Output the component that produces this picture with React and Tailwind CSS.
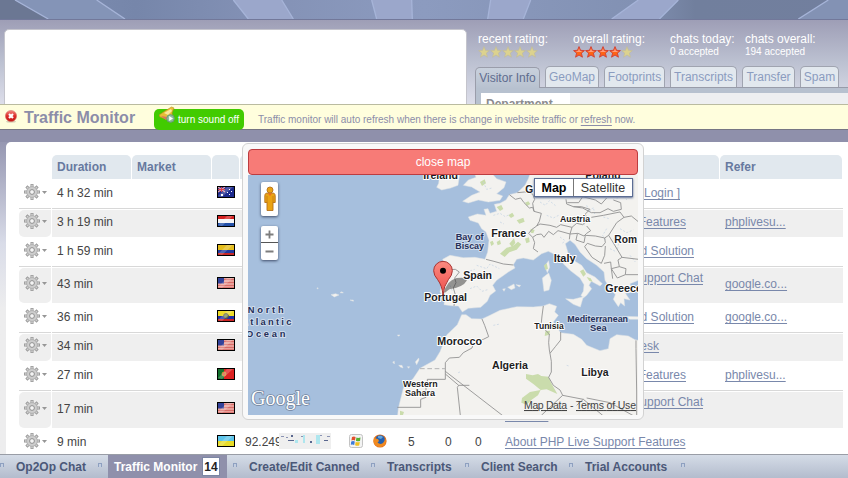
import React from "react";

const FONT = "font-['Liberation_Sans',Arial,sans-serif]";

function Banner() {
  return (
    <svg className="block h-[19px] w-full shrink-0" viewBox="0 0 2544 57" preserveAspectRatio="none">
      <defs>
        <linearGradient id="bn" x1="0" x2="1" y1="0" y2="0">
          <stop offset="0" stopColor="#7f8fb3" />
          <stop offset=".16" stopColor="#7686aa" />
          <stop offset=".3" stopColor="#8391b5" />
          <stop offset=".5" stopColor="#8c9bbf" />
          <stop offset=".75" stopColor="#8291b3" />
          <stop offset=".82" stopColor="#717f9d" />
          <stop offset="1" stopColor="#727f9e" />
        </linearGradient>
      </defs>
      <rect width="2544" height="57" fill="url(#bn)" />
      <path d="M0 0H45L145 57H0Z" fill="#6b7793" />
      <path d="M45 0H290L375 57H145Z" fill="#8494b7" />
      <path d="M700 0H845L880 57H745ZM1115 0H1235L1237 57H1130ZM1472 0H1592L1570 57H1463ZM1915 0H2035L1978 57H1835Z" fill="#9ba7cb" />
      <path d="M2485 0H2544V57H2395Z" fill="#8392b4" />
      <path
        d="M45 0L145 57M290 0L375 57M700 0L745 57M845 0L880 57M1115 0L1130 57M1235 0L1237 57M1472 0L1463 57M1592 0L1570 57M1915 0L1835 57M2035 0L1978 57M2485 0L2395 57"
        fill="none" stroke="#a6b4d8" strokeWidth="4"
      />
    </svg>
  );
}

function Star({ on }) {
  return (
    <svg className="h-3 w-3" viewBox="0 0 12 12">
      <path d="M6 .6L7.5 4.3L11.4 4.6L8.4 7.1L9.4 11.2L6 9L2.6 11.2L3.6 7.1L.6 4.6L4.5 4.3Z"
        fill={on ? "#ff6414" : "#dcd28e"} stroke={on ? "#d24438" : "#c0bb9c"} strokeWidth={on ? "1" : ".7"} />
      {on && <path d="M6 2.4L7 5L9.2 5.2L8 6L4 6L2.8 5.2L5 5Z" fill="#ff9c80" />}
    </svg>
  );
}

function Rating({ label, score, className }) {
  return (
    <div className={className}>
      <div>{label}</div>
      <div className="flex">{[0, 1, 2, 3, 4].map((i) => <Star key={i} on={i < score} />)}</div>
    </div>
  );
}

const tabs = [
  ["GeoMap", "w-[54px]"], ["Footprints", "w-[61px]"], ["Transcripts", "w-[67px]"],
  ["Transfer", "w-[53px]"], ["Spam", "w-[39px]"],
];

function Header() {
  return (
    <header className="flex h-[85px] shrink-0 overflow-hidden border-t border-[#72789a] bg-linear-to-b from-[#9e9eb6] via-[#bcc1d1] to-[#dddeea] pl-1">
      <div className="mt-[9px] h-20 w-[463px] shrink-0 rounded-t-[5px] border border-[#c4c4cc] bg-white" />
      <div className="ml-2 flex w-[373px] shrink-0 flex-col">
        <div className="flex h-[46px] shrink-0 pl-[3px] pt-3 text-[12px] leading-[14px] text-white">
          <Rating label="recent rating:" score={0} className="w-[95px]" />
          <Rating label="overall rating:" score={4} className="w-[97px]" />
          <div className="w-[75px]">
            <div>chats today:</div>
            <div className="text-[10px] leading-[11px]">0 accepted</div>
          </div>
          <div>
            <div>chats overall:</div>
            <div className="text-[10px] leading-[11px]">194 accepted</div>
          </div>
        </div>
        <div className="flex shrink-0 gap-[5px] text-[12px]">
          <div className="mt-px h-[22px] w-[65px] rounded-t-[5px] border border-b-0 border-[#9a9daa] bg-linear-to-b from-[#c9d1dd] to-[#b7c1cf] pt-px text-center leading-[19px] text-[#5f6c8e]">
            Visitor Info
          </div>
          {tabs.map(([t, w]) => (
            <div key={t} className={`h-[21px] rounded-t-[5px] border border-b-0 border-[#a0a4b0] bg-[#e2e8ee] text-center leading-[20px] text-[#8b9cbf] ${w}`}>
              {t}
            </div>
          ))}
        </div>
        <div className="-mt-[2px] ml-[65px] h-px shrink-0 bg-[#989ca9]" />
        <div className="flex h-[30px] shrink-0 border-l border-[#9a9daa] bg-[#b7c1cf] pl-[5px] pt-[5px]">
          <div className="w-[89px] bg-white pl-[5px] pt-[4px] text-[12px] font-bold leading-[14px] text-[#8b8b8f]">Department</div>
          <div className="grow bg-[#eeeff1]" />
        </div>
      </div>
    </header>
  );
}

function NoticeBar() {
  return (
    <div className="flex h-[26px] shrink-0 border-b border-t border-b-[#767684] border-t-[#babba0] bg-[#fffedd] pl-[5px] text-[#8c8da9]">
      <svg className="mt-[5px] h-[13px] w-3" viewBox="0 0 12 13">
        <defs><linearGradient id="rd" x1="0" x2="0" y1="0" y2="1"><stop stopColor="#f48b84" /><stop offset=".5" stopColor="#dc2c28" /><stop offset="1" stopColor="#c31414" /></linearGradient></defs>
        <ellipse cx="6" cy="11.6" rx="5" ry="1.2" fill="#d8d2b8" />
        <circle cx="6" cy="6" r="5.6" fill="url(#rd)" stroke="#d46a60" strokeWidth=".5" />
        <path d="M4 4L8 8M8 4L4 8" stroke="#fff" strokeWidth="2.2" />
      </svg>
      <h1 className="ml-[7px] w-[130px] text-[16px] font-bold leading-[25px]">Traffic Monitor</h1>
      <div className="mt-1 flex h-[21px] w-[90px] rounded-[5px] bg-[#42cb00] pl-[5px] text-[10px] leading-[21px] text-white">
        <svg className="-mt-[3px] mr-[3px] h-[18px] w-4 shrink-0" viewBox="0 0 16 18">
          <path d="M12.5 1L15 2L13 7L14 13L9 14L1 11L0 9L6 5Z" fill="#e7bd35" stroke="#b98b1c" strokeWidth=".6" />
          <path d="M12 3L5 7L9 9L13 5Z" fill="#fbe79a" />
          <path d="M2 10L8 11L7 14Z" fill="#d7765e" />
          <circle cx="11.5" cy="12.5" r="3.8" fill="#8fbd98" stroke="#6d987d" />
          <path d="M10.2 10L14 12.5L10.2 15Z" fill="#fff" />
        </svg>
        <span className="whitespace-nowrap">turn sound off</span>
      </div>
      <p className="ml-[14px] whitespace-nowrap text-[10px] leading-[29px]">
        Traffic monitor will auto refresh when there is change in website traffic or <a className="underline underline-offset-2">refresh</a> now.
      </p>
    </div>
  );
}

function Gear() {
  return (
    <svg className="h-4 w-6" viewBox="0 0 24 16">
      <g stroke="#969696" strokeWidth="3">
        <path d="M8 0V16M0 8H16M2.4 2.4L13.6 13.6M13.6 2.4L2.4 13.6" />
      </g>
      <g stroke="#cfcfcf" strokeWidth="1.6">
        <path d="M8 .8V15.2M.8 8H15.2M3 3L13 13M13 3L3 13" />
      </g>
      <circle cx="8" cy="8" r="5.4" fill="#cdcdcd" stroke="#a9a9a9" strokeWidth=".8" />
      <circle cx="8" cy="8" r="2.4" fill="#f4f4f4" stroke="#8f8f8f" strokeWidth="1" />
      <path d="M18 7H23L20.5 10Z" fill="#969696" />
    </svg>
  );
}

function FlagArt({ kind }) {
  switch (kind) {
    case "au":
      return (<><rect width="18" height="12" fill="#1c2a8e" /><path d="M1 1L8 6M8 1L1 6" stroke="#e8a0a8" strokeWidth="1.3" /><path d="M4.5 1V6M1 3.5H8" stroke="#d84050" /><path d="M4 8h2v2H4zM12 3h1v1h-1zM14 5h1v1h-1zM12 8h1v1h-1zM10 6h1v1h-1z" fill="#fff" /></>);
    case "nl":
      return (<><rect width="18" height="12" fill="#f4f4f6" /><rect width="18" height="4" fill="#d42020" /><rect y="8" width="18" height="4" fill="#2350a8" /></>);
    case "co":
      return (<><rect width="18" height="12" fill="#e4bd1c" /><rect y="6" width="18" height="3" fill="#223a9e" /><rect y="9" width="18" height="3" fill="#c82828" /></>);
    case "ec":
      return (<><rect width="18" height="12" fill="#efdc28" /><rect y="6" width="18" height="3" fill="#2030a8" /><rect y="9" width="18" height="3" fill="#cc2626" /><circle cx="9" cy="6" r="2.4" fill="#7c8c5c" stroke="#5a5a40" /></>);
    case "us":
      return (<><rect width="18" height="12" fill="#e8a09a" /><path d="M0 2.5H18M0 5.5H18M0 8.5H18M0 10.8H18" stroke="#d86c68" strokeWidth="1.2" /><rect width="7" height="6.5" fill="#33429a" /></>);
    case "pt":
      return (<><rect width="18" height="12" fill="#dc2222" /><rect width="7" height="12" fill="#12702c" /><circle cx="7" cy="6" r="2" fill="#e05a40" stroke="#c8a830" strokeWidth=".8" /></>);
    default:
      return (<><rect width="18" height="12" fill="#5cc4ea" /><rect y="6" width="18" height="6" fill="#e8dc28" /></>);
  }
}

function Flag({ kind }) {
  return (
    <svg className="h-3 w-[18px]" viewBox="0 0 18 12">
      <FlagArt kind={kind} />
      <path d="M1 10L10 1H16L5 11Z" fill="#fff" opacity=".22" />
      <rect x=".5" y=".5" width="17" height="11" fill="none" stroke="#000" />
    </svg>
  );
}

const rows = [
  { d: "4 h 32 min", f: "au", link: "[ Login ]", w: "w-[175px]" },
  { d: "3 h 19 min", f: "nl", h: "h-[27px]", link: "Features", w: "w-[181px]", refer: "phplivesu..." },
  { d: "1 h 59 min", f: "co", link: "and Solution", w: "w-[189px]" },
  { d: "43 min", f: "us", h: "h-[35px]", link: "Support Chat", second: "Solution", w: "w-[198px]", refer: "google.co..." },
  { d: "36 min", f: "ec", link: "and Solution", w: "w-[189px]", refer: "google.co..." },
  { d: "34 min", f: "us", h: "h-[27px]", link: "Desk", w: "w-[154px]" },
  { d: "27 min", f: "pt", link: "Features", w: "w-[181px]", refer: "phplivesu..." },
  { d: "17 min", f: "us", h: "h-[36px]", link: "Support Chat", second: "Solution", w: "w-[198px]" },
];

function RowCells({ row }) {
  return (
    <>
      <div className="w-[78px] pl-[5px] pt-[2px]">{row.d}</div>
      <div className="w-[87px]" />
      <Flag kind={row.f} />
    </>
  );
}

const LINK = "text-[#7988ab] underline underline-offset-2";

function Row({ row }) {
  const gray = !!row.h;
  const bg = gray ? "bg-[#efefef]" : "border-b border-[#d8d8d8]";
  return (
    <div className={`flex shrink-0 ${gray ? row.h : "mb-px h-[30px]"}`}>
      <div className={`mr-px flex w-8 items-center pl-[5px] ${gray ? "rounded-l-[5px] rounded-br-[5px] pb-[5px]" : "pb-[3px]"} ${bg}`}>
        <Gear />
      </div>
      <div className={`flex w-[791px] items-center ${gray ? "pb-[5px]" : "pb-[3px]"} ${bg}`}>
        <RowCells row={row} />
        <div className="ml-[270px] w-[220px] pt-[2px]">
          {row.second ? (
            <div className="-my-2 leading-[13px]">
              <div className={`pt-px text-right ${row.w} ${LINK}`}>{row.link}</div>
              <div className={LINK}>{row.second}</div>
            </div>
          ) : (
            <div className={`text-right ${row.w} ${LINK}`}>{row.link}</div>
          )}
        </div>
        <div className={`pt-[2px] ${LINK}`}>{row.refer}</div>
      </div>
    </div>
  );
}

function LastRow() {
  return (
    <div className="flex h-[27px] shrink-0">
      <div className="mr-px flex w-8 items-center pb-px pl-[5px]"><Gear /></div>
      <div className="flex w-[791px] items-center pb-px">
        <RowCells row={{ d: "9 min", f: "ua" }} />
        <div className="ml-[10px] w-[34px] overflow-hidden pt-[2px]">92.249</div>
        <svg className="h-4 w-[52px] bg-[#efefef]" viewBox="0 0 52 16">
          <path d="M2 3h3v1H2zM7 4h2v1H7zM22 3h3v1h-3zM40 2h3v1h-3zM48 3h3v1h-3z" fill="#8a93b4" />
          <path d="M12 2h2v2h-2zM9 7h6v1H9zM31 8h2v2h-2zM45 7h4v1h-4z" fill="#59678f" />
          <path d="M16 7h3v3h-3zM24 2h2v8h-2zM37 2h4v9h-4z" fill="#aee6ee" />
        </svg>
        <svg className="ml-[18px] h-[14px] w-[14px]" viewBox="0 0 14 14">
          <rect x=".5" y=".5" width="13" height="13" rx="2" fill="#f3f3f3" stroke="#c3c3c3" />
          <path d="M3 3Q5 2 6.6 3L6 6.4Q4 5.6 2.4 6.4Z" fill="#e2502c" />
          <path d="M7.4 3.5Q9 4.4 11.5 3.5L11 7Q8.5 7.6 6.9 6.7Z" fill="#55b030" />
          <path d="M2.2 7.5Q4 6.6 5.8 7.4L5.2 11Q3.6 10 1.8 10.8Z" fill="#3c7ad8" />
          <path d="M6.7 7.8Q8.4 8.7 10.8 8L10.2 11.4Q8 12.2 6.1 11.2Z" fill="#f0c020" />
        </svg>
        <svg className="ml-[10px] h-[14px] w-[14px]" viewBox="0 0 14 14">
          <circle cx="7" cy="7" r="6.6" fill="#e2711d" />
          <circle cx="7.2" cy="6" r="4.8" fill="#2460b0" />
          <path d="M5 2Q8 1 10 3L8 5L5 4Z" fill="#62a4dc" />
          <path d="M1 3Q2 5 5 5L6 7L4.5 8.5Q7 11 10 9Q12 7 12 4Q14 8 11.5 11Q8 14 4 12.3Q0 10 .5 6Z" fill="#f08a20" />
        </svg>
        <div className="ml-[21px] w-[37px] pt-[2px]">5</div>
        <div className="w-[30px] pt-[2px]">0</div>
        <div className="w-[30px] pt-[2px]">0</div>
        <div className={`whitespace-nowrap pt-[2px] ${LINK}`}>About PHP Live Support Features</div>
      </div>
    </div>
  );
}

const labels = [
  // text, centre x, baseline, font size, width, over water, letter-spaced
  ["Ireland", 122, 20, 32, 104], ["Poland", 609, 20, 32, 106],
  ["G", 388, 62, 32, 24], ["Austria", 525, 150, 27, 90], ["France", 326, 194, 32, 105],
  ["Bay of", 209, 204, 27, 84, 1], ["Biscay", 209, 230, 27, 86, 1],
  ["Rom", 677, 212, 33, 68], ["Italy", 494, 269, 33, 66], ["Spain", 233, 320, 32, 86],
  ["Portugal", 137, 388, 33, 128], ["Greece", 671, 359, 32, 110],
  ["Tunisia", 447, 470, 26, 88], ["Mediterranean", 593, 449, 27, 182, 1], ["Sea", 595, 476, 27, 50, 1],
  ["Morocco", 179, 520, 32, 134], ["Algeria", 330, 592, 33, 108], ["Libya", 585, 613, 33, 82],
  ["Western", 61, 644, 27, 104], ["Sahara", 60, 671, 27, 90],
  ["North", -403, 423, 28, 108, 1, 1], ["Atlantic", -401, 460, 28, 150, 1, 1], ["Ocean", -403, 496, 28, 118, 1, 1],
];

const greens = "M290 105l14-6 6 12-10 6zM325 130l12-8 6 10-10 6zM350 145l20-8 4 12-16 6zM290 210l10-6 3 12-10 4zM328 215l14-16 4 14-10 12zM300 245l20-18 18-4 16-14 10 8-14 16-22 8-14 14zM375 200l12-4 2 14-10 4zM270 210l8-4 4 10-8 6zM392 170l12 4-4 10-8-2zM375 92l10-4 6 8-10 6zM240 30l14-8 4 12-12 8zM432 280l8-6 4 16-8 4zM540 298l10-6 8 14-8 8zM560 315l12 4 6 10-10-2zM436 478l14-2-2 12-14 4zM378 606l20 4 16-4 10 6 22 2 6 16 20 36-32-14-18 2-22-18-22-16zM366 678l24-18 32-6-8 16-20 14-14 14-16-6zM0 716l12 4-4 12H0z";

function WorldMap() {
  return (
    <svg className="block h-[240px] w-[390px]" viewBox="248 175 390 240">
      <defs>
        <linearGradient id="pin" x1="0" x2="0" y1="0" y2="1"><stop stopColor="#fb8a80" /><stop offset="1" stopColor="#ee4e4a" /></linearGradient>
      </defs>
      <rect x="248" y="175" width="390" height="240" fill="#a6bfdd" />
      <g transform="translate(400 172) scale(.333333)">
        <g fill="#f3f2ef" stroke="#dfe3e5" strokeWidth="1.5">
          <path d="M392 0L385 20L375 40L352 62L328 68L318 84L300 94L283 97L290 118L270 124L264 110L252 112L258 130L232 126L205 135L210 145L235 153L245 170L258 180L267 205L263 240L255 262L225 256L190 257L150 250L128 262L135 280L132 310L120 360L134 380L132 398L160 402L175 402L187 420L205 409L242 406L262 388L270 370L287 357L278 340L290 325L325 300L345 288L340 278L350 262L370 258L400 264L425 245L445 238L470 250L490 275L510 295L540 318L552 338L550 358L543 370L550 378L560 370L575 350L567 340L574 328L600 342L607 335L585 315L560 302L545 280L520 265L505 245L496 215L510 205L525 217L540 240L560 260L590 280L612 300L615 325L628 345L646 368L640 382L655 404L662 392L674 402L672 380L690 384L676 364L698 360L690 335L715 325L730 318V0Z" />
          <path d="M222 0L228 16L205 24L190 40L215 45L240 60L215 70L188 88L205 93L235 84L265 90L300 85L308 72L290 65L312 47L318 30L290 20L272 0Z" />
          <path d="M120 0L116 34L110 46L125 54L152 48L174 40L180 0Z" />
          <path d="M-8 740L-5 709L10 649L40 619L60 589L105 564L120 539L140 489L172 458L185 428L198 428L215 440L246 441L270 430L300 415L350 404L400 405L430 402L448 395L470 403L464 420L475 430L460 450L482 482L520 487L545 502L560 520L600 536L625 530L630 500L650 488L685 492L705 503L730 508V740Z" />
          <path d="M497 380L520 382L550 374L541 405L520 397ZM427 318L446 303L454 325L447 354L432 358ZM434 282L446 266L449 286L442 302ZM323 346L342 336L345 348L334 353ZM348 338L362 340L358 345ZM308 351L316 350L312 358ZM668 433L716 434L716 442L690 442ZM690 344L708 350L700 357Z" />
          <path d="M-207 368l14-3 10 4-14 6zM-180 362l6-3 4 4zM-150 384l10 0 0 4zM-248 347l3 2-4 2zM-8 489l8 0-4 4zM-22 570l5-2 0 8zM-4 580l10 0 3 8-8-3zM22 584l7 0-3 5zM46 570l10-12 1 6-7 14z" />
        </g>
        <path d={greens} fill="#cadcac" />
        <path d="M560 100l8 20 12-14 4 20M640 60l10 20 20-16 10 20M280 130l20-6 16 10 14-8M230 280l30 10 10-14 28 14M210 350l20-8 16 16 20-6M480 195l14 10-8 12M620 170l-12 20 8 14M250 30l10 22 16-4M300 150l12 6M610 135l20 6M280 460l20-4M500 580l10 3M180 600l-10 4M640 200l16 14-4 20M420 90l16 10 12-14 20 16M440 130l20 8 20-10M540 150l16 10M660 170l20 12 20-8M630 230l20 10M690 250l16 20M200 300l24-8M150 340l8 20" fill="none" stroke="#bfd0e2" strokeWidth="2" strokeDasharray="6 5" />
        <path
          d="M258 262L282 268L310 276L340 279M132 294L166 292L178 300L164 318L168 332L160 348L166 368L162 402M328 68L346 82L362 78L372 92L388 108L398 106L402 118L424 124L418 148L410 162L420 156L450 160L470 166L482 158L516 166L530 154L548 158L562 146L556 126L570 112L544 104L520 104L500 96L498 82M352 62L374 60L398 66L404 82L398 94L402 118M410 162L396 172L386 184L398 196L404 212L400 230L414 240M398 196L410 188L424 186L432 196L446 178L460 188L474 176L510 186L508 202M516 166L510 186L534 184L552 192L560 184L572 176L560 162M532 186L528 204L552 212L556 190L586 192L614 198L616 212L606 224L586 222L562 214L554 224L576 256L604 274L614 250L616 222M520 104L548 108L574 122L600 122L624 110L640 118L664 112L662 92L640 84M574 136L610 130L660 120L672 136L650 152L626 190L614 198M672 136L694 132L716 150M626 190L642 216L666 256L654 264L658 284L634 290L632 270L612 274M638 320L634 290L652 318L676 308L678 290L658 284M666 256L716 262M676 308L716 308M502 92L536 92L548 74L586 84L604 96L620 78"
          fill="none" stroke="#949494" strokeWidth="2.8" strokeLinejoin="round"
        />
        <path
          d="M430 402L426 432L424 452L434 472L448 486L446 512L448 534L450 544L466 524L482 504L482 480M246 441L254 460L266 494L250 502L222 508L216 528L190 542L178 556L148 558L136 572V622H82V640H78V676L62 682V706H-8M136 598L320 740M136 606L176 640H208M176 640L172 646L182 740M450 544L454 568V600L446 616L460 640L480 654L488 670L424 730M488 670L550 682L620 740M550 682L530 700M560 678L630 692L716 740M708 505V530L710 660V730"
          fill="none" stroke="#8c8c8c" strokeWidth="2.5" strokeLinejoin="round"
        />
        <path d="M60 590H136" stroke="#b4b4b4" strokeWidth="3" strokeDasharray="14 8" />
        <path d="M130 366Q140 325 170 318Q205 314 200 326Q190 345 148 352Z" fill="#333" opacity=".5" />
        {labels.map(([t, x, y, s, w, sea, spaced]) => (
          <text key={t} x={x} y={y} fontSize={s} textLength={w} lengthAdjust={spaced ? "spacing" : "spacingAndGlyphs"} textAnchor="middle" fontWeight="bold"
            fill={sea ? "#26305a" : "#1c1c22"} stroke={sea ? "#cfdcec" : "#ffffff"} strokeWidth="6" strokeLinejoin="round" paintOrder="stroke">
            {t}
          </text>
        ))}
        <path d="M129 370Q127 342 113 323Q101 310 101 296A28 28 0 0 1 157 296Q157 310 145 323Q131 342 129 370Z" fill="url(#pin)" stroke="#a83432" strokeWidth="3" />
        <circle cx="129" cy="296" r="9" fill="#000" />
      </g>
      <g fontSize="10.5" fill="#444">
        <text x="524" y="409" textLength="43" textDecoration="underline">Map Data</text>
        <text x="570" y="409">-</text>
        <text x="576" y="409" textLength="60" textDecoration="underline">Terms of Use</text>
      </g>
      <text x="251" y="405" fontSize="21" textLength="59" lengthAdjust="spacingAndGlyphs" fontFamily="Liberation Serif, serif" fill="#fff" stroke="#73859e" strokeWidth="1.6" paintOrder="stroke">Google</text>
    </svg>
  );
}

function MapPopup() {
  return (
    <div className="absolute left-[242px] top-[143px] h-[277px] w-[402px] rounded-[6px] border border-[#d2d2d2] bg-[#f9f9f9] p-[5px]">
      <div className="h-[26px] rounded-[4px] border border-[#bc3c40] bg-[#f77b77] text-center text-[12px] leading-[24px] text-white">close map</div>
      <div className="relative h-[240px]">
        <WorldMap />
        <div className="absolute left-[13px] top-[7px] flex h-[34px] w-[17px] items-center justify-center rounded-[2px] bg-white shadow-[0_1px_3px_#3c4a66]">
          <svg className="h-[26px] w-[12px]" viewBox="0 0 12 26">
            <g fill="#eaa313" stroke="#b5701a" strokeWidth=".9">
              <path d="M2 7.2H10Q11.2 8 11.2 10V16.5H9V24.5H3V16.5H.8V10Q.8 8 2 7.2Z" />
              <circle cx="6" cy="4" r="3" />
            </g>
            <path d="M4 7.5H8L6 10Z" fill="#f26b1c" />
            <path d="M3 10V17M9 10V17" stroke="#c47c14" strokeWidth=".8" />
          </svg>
        </div>
        <div className="absolute left-[13px] top-[51px] flex h-[34px] w-[17px] flex-col rounded-[2px] bg-white shadow-[0_1px_3px_#3c4a66]">
          <svg className="h-[34px] w-[17px]" viewBox="0 0 17 34">
            <path d="M4.5 8.5H12.5M8.5 4.5V12.5M4.5 25.5H12.5" stroke="#7d7d7d" strokeWidth="1.8" />
            <path d="M0 16.5H17" stroke="#555" />
          </svg>
        </div>
        <div className="absolute left-[286px] top-[3px] flex h-[19px] w-[99px] border border-[#5c6d94] bg-white text-center text-[12.5px] leading-[18px] text-black shadow-[0_1px_2px_#5c6d94]">
          <div className="w-[39px] border-r border-[#777] font-bold">Map</div>
          <div className="grow text-[#333]">Satellite</div>
        </div>
      </div>
    </div>
  );
}

function Sep() {
  return <i className="-mt-[3px] block h-1 w-1 border border-b-0 border-[#8ea0c0] bg-[#c3cee0]" />;
}

function BottomBar() {
  return (
    <nav className="flex h-6 shrink-0 items-center border-t border-[#999da6] bg-linear-to-b from-[#d5dce7] to-[#b3bccd] text-[12px] font-bold whitespace-nowrap text-[#4b5878]">
      <Sep />
      <span className="ml-3 w-[82px]">Op2Op Chat</span>
      <Sep />
      <div className="mx-[6px] flex h-full w-[119px] items-center bg-[#8f90ab] pl-[6px] text-white">
        <span className="w-[88px]">Traffic Monitor</span>
        <span className="h-[19px] w-[18px] border border-[#7b86a4] bg-white text-center leading-[18px] text-[#222]">14</span>
      </div>
      <Sep />
      <span className="ml-3 w-[122px]">Create/Edit Canned</span>
      <Sep />
      <span className="ml-[12px] w-[78px]">Transcripts</span>
      <Sep />
      <span className="ml-3 w-[88px]">Client Search</span>
      <Sep />
      <span className="ml-3 w-[96px]">Trial Accounts</span>
      <Sep />
    </nav>
  );
}

const HEAD = "h-6 rounded-t-[5px] bg-[#e1e8ee] pl-[5px] leading-[24px]";

export default function App() {
  return (
    <div className={`relative flex h-[478px] w-[848px] flex-col overflow-hidden bg-white ${FONT}`}>
      <Banner />
      <Header />
      <NoticeBar />
      <main className="flex min-h-0 grow flex-col overflow-hidden bg-linear-to-b from-[#8e8fab] from-0% via-[#d9dce8] via-35% to-[#ededee] to-55%">
        <div className="h-3 shrink-0 bg-[#8f90ab]" />
        <div className="ml-[6px] flex min-h-0 grow flex-col overflow-hidden rounded-tl-[5px] bg-white pl-[13px] pt-[13px] text-[12px] leading-[14px] text-[#444]">
          <div className="flex shrink-0 gap-px pl-[33px] font-bold text-[#67799f]">
            <div className={`w-[79px] ${HEAD}`}>Duration</div>
            <div className={`w-[79px] ${HEAD}`}>Market</div>
            <div className={`w-[27px] ${HEAD}`} />
            <div className={`w-[479px] ${HEAD}`} />
            <div className={`w-[122px] ${HEAD}`}>Refer</div>
          </div>
          {rows.map((r) => <Row key={r.d} row={r} />)}
          <LastRow />
        </div>
      </main>
      <BottomBar />
      <MapPopup />
    </div>
  );
}
